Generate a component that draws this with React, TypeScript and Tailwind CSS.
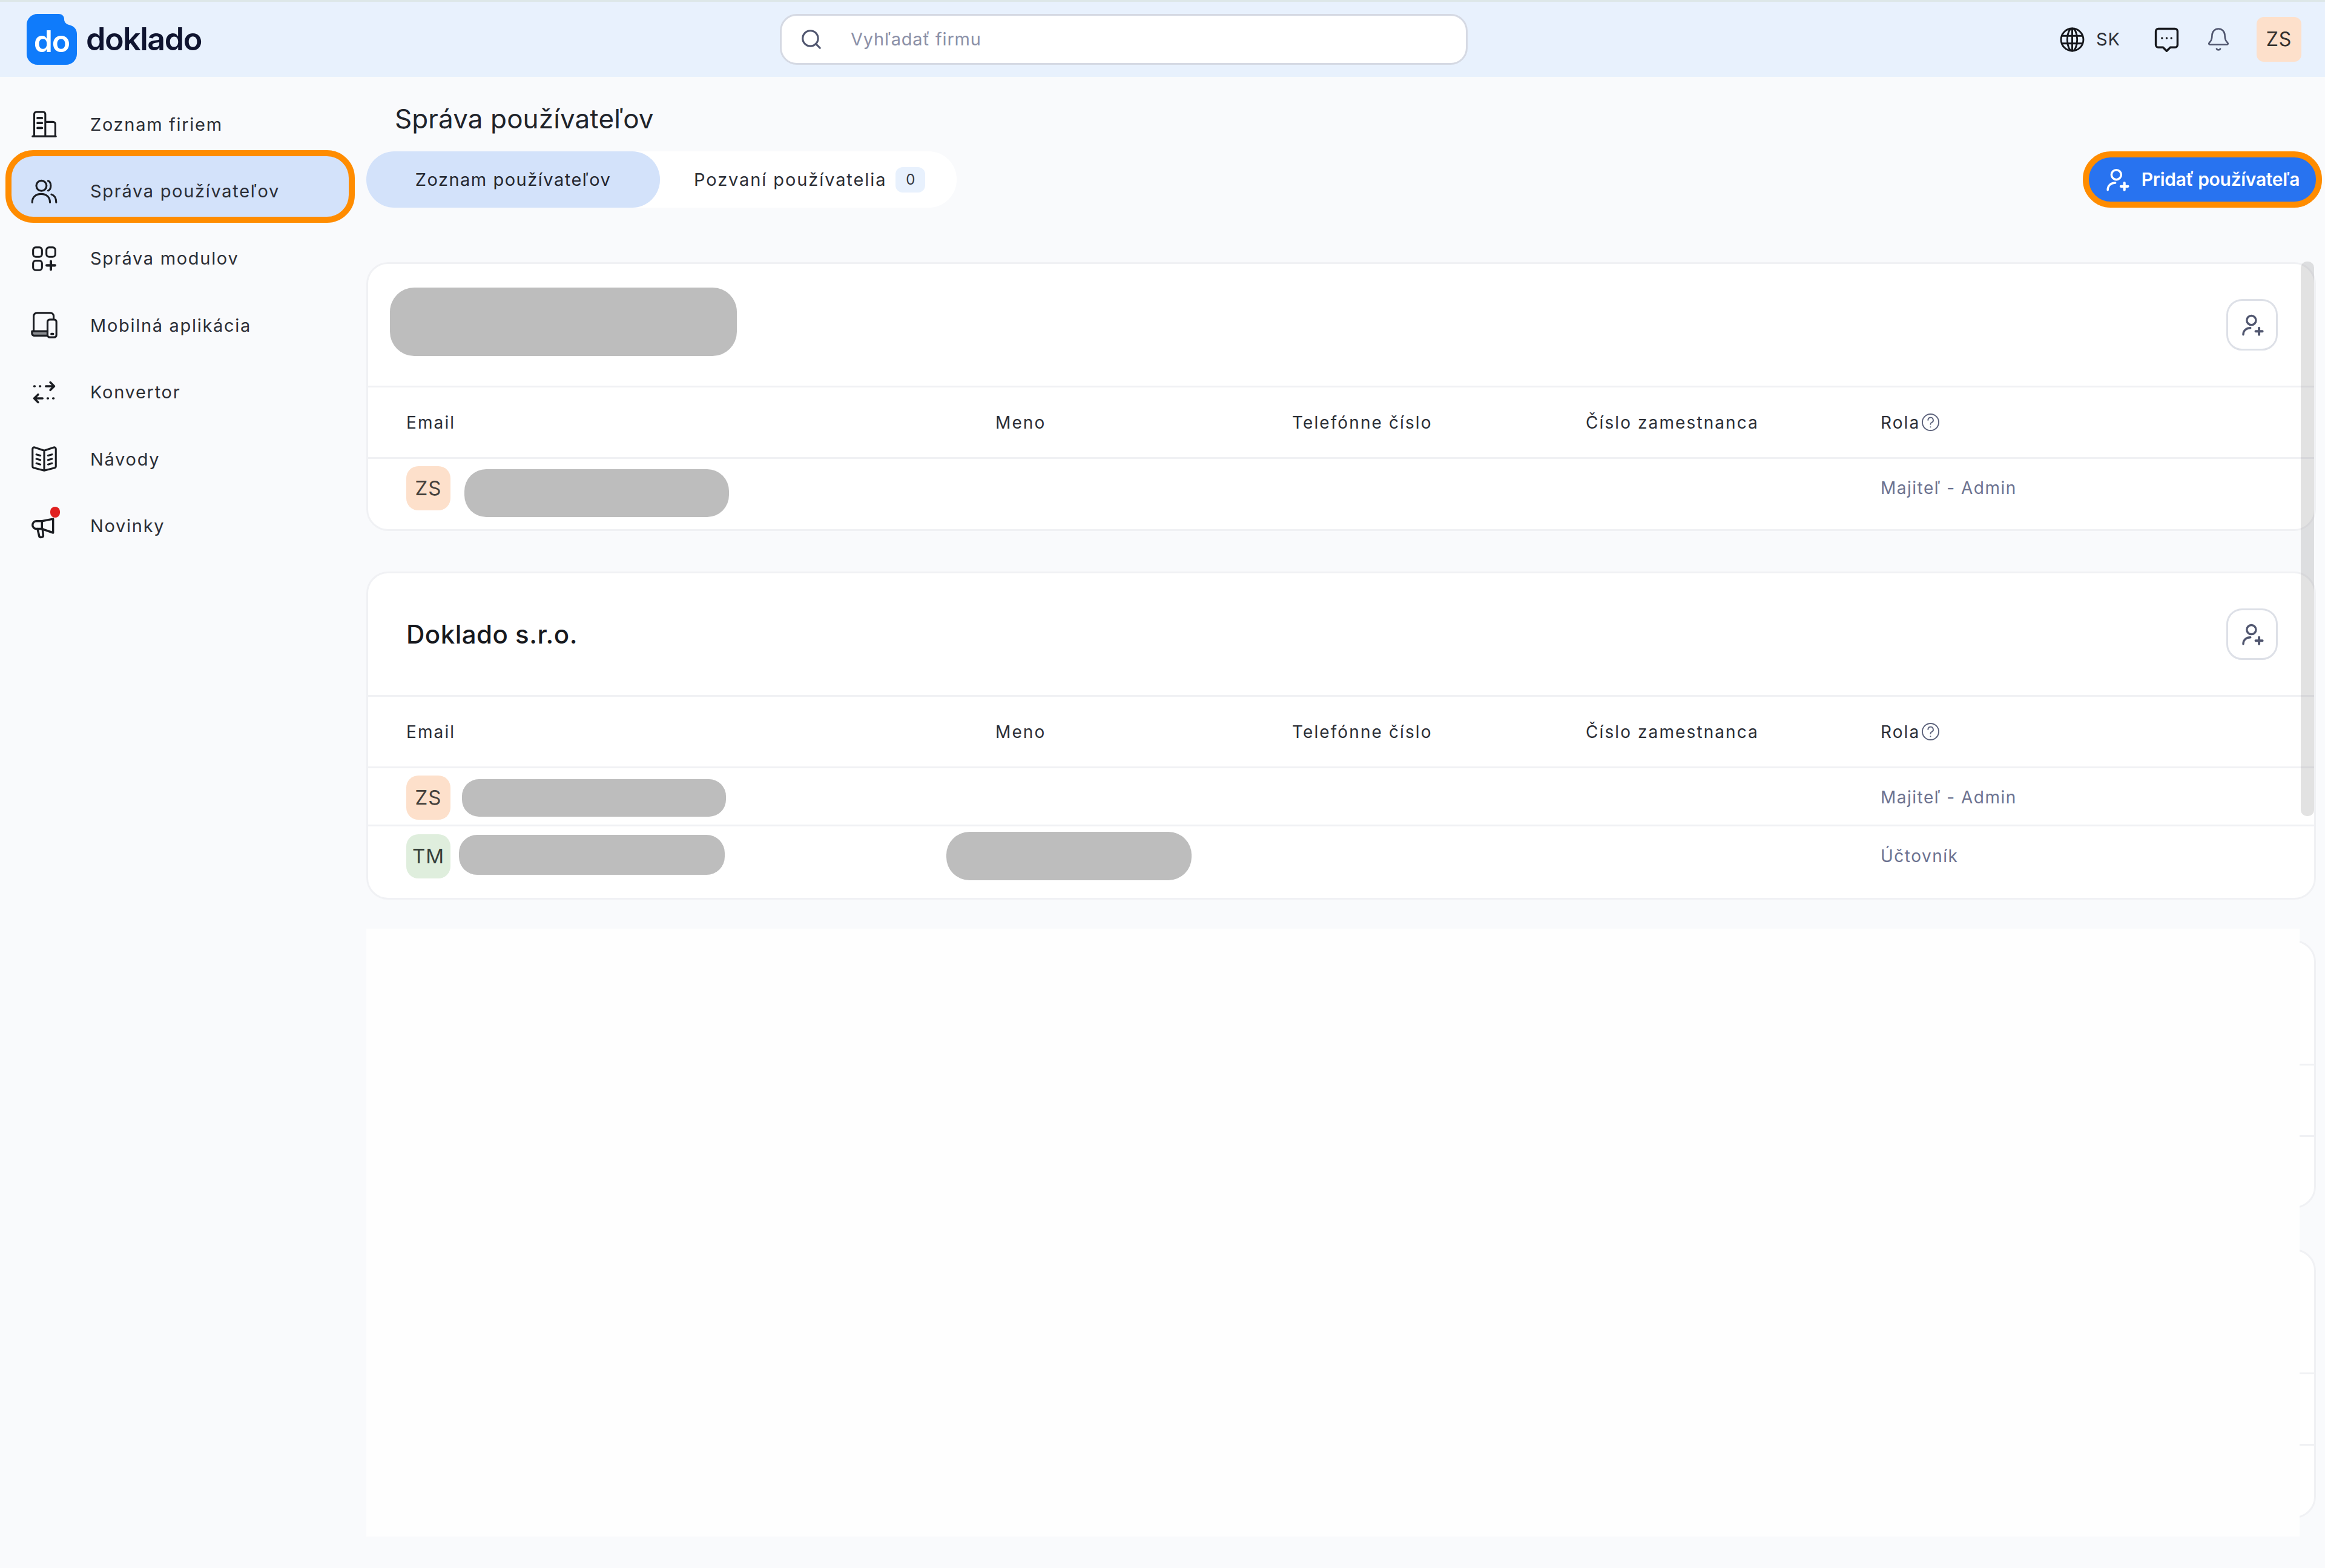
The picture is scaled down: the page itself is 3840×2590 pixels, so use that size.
import React from 'react';
import { Bell, Search } from 'lucide-react';

const Icon: React.FC<{ className?: string; strokeWidth?: number; children: React.ReactNode }> = ({
  className = 'w-[44px] h-[44px] text-[#1b1d22]',
  strokeWidth = 1.7,
  children,
}) => (
  <svg viewBox="0 0 24 24" fill="none" stroke="currentColor" strokeWidth={strokeWidth} strokeLinecap="round" strokeLinejoin="round" className={className}>
    {children}
  </svg>
);

const BuildingIcon = () => (
  <Icon>
    <path d="M1.500 23h21M3 23V3a2 2 0 0 1 2-2h6a2 2 0 0 1 2 2v20M13 10h7a2 2 0 0 1 2 2v11" />
    <path d="M6 6.500h4M6 11h4M6 15.500h4" strokeWidth={2} />
  </Icon>
);

const UsersIcon = () => (
  <Icon>
    <circle cx="9.500" cy="7" r="4.600" />
    <path d="M15.500 2.600c3.200 1 3.200 7.800 0 8.800M1.200 22c0-5 3.500-7.600 8-7.600s8 2.600 8 7.600M18.500 14.800c2.800.9 4.300 3.500 4.300 7.200" />
  </Icon>
);

const ModulesIcon = () => (
  <Icon>
    <rect x="2" y="2" width="8" height="8.500" rx="2.400" />
    <rect x="14" y="2" width="8" height="8.500" rx="2.400" />
    <rect x="2" y="14" width="8" height="8.500" rx="2.400" />
    <path d="M18 14.500v7.500M14.200 18.200h7.600" strokeWidth={2.200} />
  </Icon>
);

const DevicesIcon = () => (
  <Icon>
    <path d="M2.500 18V4a3 3 0 0 1 3-3h12a3 3 0 0 1 3 3v2" />
    <path d="M1 17.500h14v4H3a2 2 0 0 1-2-2z" fill="#8a8c90" />
    <rect x="15" y="7" width="8" height="16" rx="2" fill="#f8f9fc" />
    <path d="M18.500 20h1.500" strokeWidth={2} />
  </Icon>
);

const ConverterIcon = () => (
  <Icon strokeWidth={1.900}>
    <path d="M13.500 6.500h7.500M17.500 3l3.500 3.500-3.500 3.500" />
    <path d="M3 6.500h.5M8 6.500h.5M3 17.500h7.500M6.500 14L3 17.500 6.500 21M15 17.500h.5M20 17.500h.5" />
  </Icon>
);

const BookIcon = () => (
  <Icon>
    <path d="M12 22.500 2.500 20a1.500 1.500 0 0 1-1-1.500V3c0-1 .9-1.600 1.800-1.400L12 4.500l8.700-2.900c.9-.2 1.800.4 1.800 1.400v15.500a1.500 1.500 0 0 1-1 1.500zM12 4.500v18" />
    <path d="M5 8l3.500 1M5 12l3.500 1M5 16l3.500 1M19 8l-3.500 1M19 12l-3.500 1M19 16l-3.500 1" />
  </Icon>
);

const MegaphoneIcon = () => (
  <Icon strokeWidth={1.900}>
    <path d="M20 5.500 10 7.500H5A3.500 3.500 0 0 0 1.500 11v0A3.500 3.500 0 0 0 5 14.500h5l10 3.500z" />
    <path d="M6 14.500 7.500 21c.4 1.600 3.800 1.300 3.600-.6L10.500 14.500M10 7.500v7" />
  </Icon>
);

const UserPlusIcon: React.FC<{ className: string }> = ({ className }) => (
  <Icon className={className} strokeWidth={2.100}>
    <circle cx="11" cy="7" r="4.800" />
    <path d="M2.500 22c0-4.200 3-7 7.500-7" />
    <path d="M15.500 18.500h7M19 15v7" strokeWidth={2.500} />
  </Icon>
);

const HelpIcon = () => (
  <Icon className="w-[31px] h-[31px] text-[#5e647d]" strokeWidth={1.500}>
    <circle cx="12" cy="12" r="10.500" />
    <path d="M8.800 9.200a3.300 3.300 0 1 1 4.700 3c-1 .5-1.500 1.200-1.500 2.300M12 18h.01" />
  </Icon>
);

const Logo = () => (
  <div className="relative w-[83px] h-[84px]">
    <svg viewBox="0 0 83 84" className="w-[83px] h-[84px]">
      <path d="M18 0h35c6 0 9 4 9 9 0 4 3 8 8 9 8 2 13 7 13 15v33c0 10-8 18-18 18H18C8 84 0 76 0 66V18C0 8 8 0 18 0z" fill="#0f7bfb" />
    </svg>
    <span className="absolute inset-0 flex items-center justify-center pt-[6px] text-[50px] leading-none font-semibold text-white tracking-[-1px]">do</span>
  </div>
);

const navItems = [
  { label: 'Zoznam firiem', icon: <BuildingIcon /> },
  { label: 'Správa používateľov', icon: <UsersIcon />, active: true },
  { label: 'Správa modulov', icon: <ModulesIcon /> },
  { label: 'Mobilná aplikácia', icon: <DevicesIcon /> },
  { label: 'Konvertor', icon: <ConverterIcon /> },
  { label: 'Návody', icon: <BookIcon /> },
  { label: 'Novinky', icon: <MegaphoneIcon />, dot: true },
];

const Sidebar = () => (
  <aside className="w-[605px] shrink-0 pt-[23px]">
    {navItems.map((item) =>
      item.active ? (
        <div
          key={item.label}
          className="flex items-center gap-[54px] ml-[9px] w-[577px] h-[120px] -mt-[13px] mb-[4px] pt-[16px] pl-[32px] rounded-[46px] border-[10px] border-[#ff8c00] bg-[#d3e2fa]"
        >
          {item.icon}
          <span className="text-[29px] tracking-[1.700px] text-[#2b2e36]">{item.label}</span>
        </div>
      ) : (
        <div key={item.label} className="flex items-center gap-[54px] h-[110.500px] pl-[51px]">
          <div className="relative">
            {item.icon}
            {item.dot && <span className="absolute -top-[10px] right-[-4px] w-[16px] h-[18px] rounded-full bg-[#e02020]" />}
          </div>
          <span className="text-[29px] tracking-[1.700px] text-[#2b2e36]">{item.label}</span>
        </div>
      )
    )}
  </aside>
);

const TopBar = () => (
  <header className="h-[127px] shrink-0 flex items-center bg-[#e8f1fd] border-t-[3px] border-[#dde7e8]">
    <div className="flex items-center gap-[15px] w-[1288px] pl-[44px]">
      <Logo />
      <span className="text-[52px] leading-none font-semibold tracking-[-1.500px] text-[#0f1430]">doklado</span>
    </div>
    <div className="flex items-center w-[1136px] h-[84px] pl-[30px] rounded-[28px] border-[3px] border-[#d5d9e3] bg-white">
      <Search className="w-[38px] h-[38px] text-[#50566f]" strokeWidth={2} />
      <span className="ml-[46px] text-[29px] tracking-[0.800px] text-[#8b90a7]">Vyhľadať firmu</span>
    </div>
    <div className="flex items-center ml-auto pr-[39px]">
      <svg viewBox="0 0 24 24" fill="none" stroke="#15171c" strokeWidth="1.700" className="w-[41px] h-[41px]">
        <circle cx="12" cy="12" r="10.800" />
        <ellipse cx="12" cy="12" rx="4.800" ry="10.800" />
        <path d="M1.800 8.300h20.400M1.800 15.700h20.400M12 1.200v21.600" />
      </svg>
      <span className="ml-[19px] text-[29px] tracking-[1px] text-[#2b2e36]">SK</span>
      <svg viewBox="0 0 24 24" fill="none" stroke="#15171c" strokeWidth="2" strokeLinejoin="round" className="ml-[56px] w-[41px] h-[41px]">
        <path d="M4 1.500h16a2.500 2.500 0 0 1 2.500 2.500v13a2.500 2.500 0 0 1-2.500 2.500h-4.500L12 23l-3.500-3.500H4A2.500 2.500 0 0 1 1.500 17V4A2.500 2.500 0 0 1 4 1.500z" />
        <path d="M7.500 10.500h.01M12 10.500h.01M16.500 10.500h.01" strokeLinecap="round" />
      </svg>
      <Bell className="ml-[44px] w-[42px] h-[42px] text-[#50566f]" strokeWidth={1.500} />
      <div className="ml-[42px] flex items-center justify-center w-[74px] h-[74px] rounded-[12px] bg-[#fde0cb] text-[32px] tracking-[1px] text-[#33302e]">ZS</div>
    </div>
  </header>
);

const ColumnHeads = () => (
  <div className="grid grid-cols-[973px_490px_485px_487px_1fr] items-center h-[118px] px-[63px] border-b-[3px] border-[#f0f1f4] text-[28px] tracking-[2.100px] text-[#2b2e36]">
    <span>Email</span>
    <span>Meno</span>
    <span>Telefónne číslo</span>
    <span>Číslo zamestnanca</span>
    <span className="flex items-center gap-[2px]">
      Rola
      <HelpIcon />
    </span>
  </div>
);

const Avatar: React.FC<{ initials: string; tone: 'peach' | 'green' }> = ({ initials, tone }) => (
  <div
    className={
      tone === 'peach'
        ? 'flex items-center justify-center shrink-0 w-[73px] h-[73px] rounded-[20px] bg-[#fde0cb] text-[33px] tracking-[1px] text-[#45403c]'
        : 'flex items-center justify-center shrink-0 w-[73px] h-[73px] rounded-[20px] bg-[#dfeedd] text-[33px] tracking-[1px] text-[#36403a]'
    }
  >
    {initials}
  </div>
);

const AddButton = () => (
  <button type="button" className="flex items-center justify-center w-[85px] h-[85px] rounded-[26px] border-[3px] border-[#dde0e7] bg-white">
    <UserPlusIcon className="w-[38px] h-[38px] text-[#50566f]" />
  </button>
);

const Card: React.FC<{ className?: string; header?: React.ReactNode; children: React.ReactNode }> = ({ className = '', header, children }) => (
  <section className={`rounded-[36px] border-[3px] border-[#f0f1f4] bg-white overflow-hidden ${className}`}>
    <div className="flex items-center justify-between h-[204px] pl-[36px] pr-[60px] border-b-[3px] border-[#f0f1f4]">
      {header}
    </div>
    {children}
  </section>
);

const RoleCell: React.FC<{ role: string }> = ({ role }) => (
  <span className="text-[28px] leading-[73px] tracking-[1.500px] text-[#6c7290]">{role}</span>
);

const App = () => (
  <div className="flex flex-col w-[3840px] h-[2590px] overflow-hidden bg-[#f9fafc] font-['Inter',sans-serif]">
    <TopBar />
    <div className="flex flex-1 min-h-0">
      <Sidebar />
      <main className="relative flex-1 pr-[5px]">
        <h1 className="mt-[40px] mb-[25px] ml-[47px] text-[44px] leading-[58px] tracking-[0.100px] text-[#20232a]">Správa používateľov</h1>

        <div className="flex items-center justify-between h-[93px]">
          <div className="flex items-center h-[93px] w-[975px] rounded-[46px] bg-white">
            <div className="flex items-center justify-center w-[485px] h-[93px] rounded-[46px] bg-[#d3e2fa] text-[29px] tracking-[1.500px] text-[#23262e]">
              Zoznam používateľov
            </div>
            <span className="ml-[56px] text-[29px] tracking-[1.900px] text-[#2b2e36]">Pozvaní používatelia</span>
            <span className="flex items-center justify-center ml-[15px] w-[49px] h-[42px] rounded-[12px] bg-[#e8f1fd] text-[24px] text-[#34373f]">0</span>
          </div>
          <button
            type="button"
            className="flex items-center justify-center gap-[20px] w-[395px] h-[93px] rounded-[46px] border-[10px] border-[#ff8c00] bg-[#2873f0] text-[30px] font-semibold tracking-[-0.300px] text-white"
          >
            <UserPlusIcon className="w-[40px] h-[40px] text-white" />
            Pridať používateľa
          </button>
        </div>

        <div className="flex flex-col gap-[67px] mt-[90px] mr-[10px]">
          <Card
            header={
              <>
                <div className="w-[573px] h-[113px] -mt-[10px] rounded-[40px] bg-[#bdbdbd]" />
                <AddButton />
              </>
            }
          >
            <ColumnHeads />
            <div className="grid grid-cols-[973px_490px_485px_487px_1fr] h-[116px] pt-[12px] px-[63px]">
              <div className="flex items-start gap-[23px]">
                <Avatar initials="ZS" tone="peach" />
                <div className="w-[437px] h-[79px] mt-[5px] rounded-[36px] bg-[#bdbdbd]" />
              </div>
              <span />
              <span />
              <span />
              <RoleCell role="Majiteľ - Admin" />
            </div>
          </Card>

          <Card
            header={
              <>
                <span className="pl-[27px] text-[42px] font-medium tracking-[0.500px] text-[#17191e]">Doklado s.r.o.</span>
                <AddButton />
              </>
            }
          >
            <ColumnHeads />
            <div className="grid grid-cols-[973px_490px_485px_487px_1fr] h-[96px] pt-[12px] px-[63px] border-b-[3px] border-[#f0f1f4]">
              <div className="flex items-start gap-[19px]">
                <Avatar initials="ZS" tone="peach" />
                <div className="w-[436px] h-[62px] mt-[6px] rounded-[28px] bg-[#bdbdbd]" />
              </div>
              <span />
              <span />
              <span />
              <RoleCell role="Majiteľ - Admin" />
            </div>
            <div className="grid grid-cols-[973px_490px_485px_487px_1fr] h-[118px] pt-[13px] px-[63px]">
              <div className="flex items-start gap-[14px]">
                <Avatar initials="TM" tone="green" />
                <div className="w-[439px] h-[66px] mt-[1px] rounded-[30px] bg-[#bdbdbd]" />
              </div>
              <div className="w-[405px] h-[80px] -ml-[81px] -mt-[4px] rounded-[38px] bg-[#bdbdbd]" />
              <span />
              <span />
              <RoleCell role="Účtovník" />
            </div>
          </Card>

          {/* blanked companies, only the right edge stays visible */}
          <Card>
            <div className="h-[118px] border-b-[3px] border-[#f0f1f4]" />
            <div className="h-[115px]" />
          </Card>
          <Card>
            <div className="h-[118px] border-b-[3px] border-[#f0f1f4]" />
            <div className="h-[117px]" />
          </Card>
        </div>

        {/* white cover over the blanked cards */}
        <div className="absolute left-0 top-[1407px] w-[3193px] h-[1004px] bg-[#fefefe]" />
        {/* overlay scrollbar */}
        <div className="absolute left-[3195px] top-[305px] w-[22px] h-[916px] rounded-[10px] bg-[#8a8a8a]/25" />
      </main>
    </div>
  </div>
);

export default App;
